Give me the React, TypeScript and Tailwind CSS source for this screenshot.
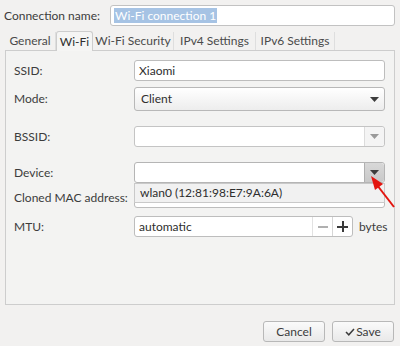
import { useState } from "react"

const tabs = [
  { name: "General", w: "w-[51px]" },
  { name: "Wi-Fi", w: "w-[37px]" },
  { name: "Wi-Fi Security", w: "w-[81px]" },
  { name: "IPv4 Settings", w: "w-[82px]" },
  { name: "IPv6 Settings", w: "w-[79px]" },
]

function Arrow({ light }: { light?: boolean }) {
  return (
    <svg width="9" height="5" viewBox="0 0 9 5">
      <path d="M0 0 L9 0 L4.5 5 Z" fill={light ? "#9a9a9a" : "#3c3c3c"} />
    </svg>
  )
}

function Label({ children }: { children: string }) {
  return <div className="w-[120px] shrink-0 text-[#3c3c3c]">{children}</div>
}

export default function App() {
  const [active] = useState("Wi-Fi")

  return (
    <div
      className="relative w-[400px] h-[346px] bg-[#f2f1f0] text-[12px] text-[#3c3c3c] overflow-hidden"
      style={{ fontFamily: "Lato, 'Open Sans', sans-serif" }}
    >
      {/* connection name */}
      <div className="flex items-center pt-[5px] pl-[4px] pr-[5px]">
        <div className="w-[106px] shrink-0">Connection name:</div>
        <div className="flex-1 h-[21px] rounded-[3px] border border-[#c2c2c2] bg-white flex items-center px-[3px]">
          <span className="bg-[#a6c3e4] text-white px-[1px] leading-[15px]">Wi-Fi connection 1</span>
        </div>
      </div>

      {/* tabs */}
      <div className="mt-[4px] mx-[5px]">
        <div className="flex items-end h-[20px]">
          {tabs.map((t) =>
            t.name === active ? (
              <div
                key={t.name}
                className={`${t.w} h-[20px] -mb-px relative z-10 flex items-center justify-center bg-[#f5f5f4] border border-b-0 border-[#cdcdcd] rounded-t-[3px] text-[#2e2e2e]`}
              >
                {t.name}
              </div>
            ) : (
              <div
                key={t.name}
                className={`${t.w} h-[18px] flex items-center justify-center border-r border-[#dedede] text-[#4a4a4a]`}
              >
                {t.name}
              </div>
            )
          )}
        </div>

        {/* panel */}
        <div className="h-[255px] border border-[#cdcdcd] bg-[#f3f3f2] pt-[9px] pl-[8px] pr-[9px]">
          {/* SSID */}
          <div className="flex items-center h-[21px]">
            <Label>SSID:</Label>
            <div className="flex-1 h-full rounded-[3px] border border-[#bdbdbd] bg-white flex items-center px-[4px] text-[#2e2e2e]">
              Xiaomi
            </div>
          </div>

          {/* Mode */}
          <div className="flex items-center h-[24px] mt-[6px]">
            <Label>Mode:</Label>
            <div className="flex-1 h-full rounded-[3px] border border-[#b8b8b8] bg-gradient-to-b from-white to-[#ededed] flex items-center justify-between pl-[6px] pr-[5px] text-[#2e2e2e]">
              <span>Client</span>
              <Arrow />
            </div>
          </div>

          {/* BSSID */}
          <div className="flex items-center h-[21px] mt-[15px]">
            <Label>BSSID:</Label>
            <div className="flex-1 h-full rounded-[3px] border border-[#c4c4c4] bg-white flex">
              <div className="flex-1" />
              <div className="w-[20px] border-l border-[#dcdcdc] bg-[#f4f4f4] rounded-r-[3px] flex items-center justify-center">
                <Arrow light />
              </div>
            </div>
          </div>

          {/* Device */}
          <div className="relative z-10 flex items-center h-[21px] mt-[15px]">
            <Label>Device:</Label>
            <div className="relative flex-1 h-full rounded-[3px] border border-[#b5b5b5] bg-white flex">
              <div className="flex-1" />
              <div className="w-[20px] border-l border-[#b0b0b0] bg-gradient-to-b from-[#d8d8d8] to-[#c9c9c9] rounded-r-[3px] flex items-center justify-center">
                <Arrow />
              </div>
              <div className="absolute left-[-1px] right-[-1px] top-[20px] h-[20px] border border-[#c9c9c9] bg-[#f1f1f1] flex items-center pl-[5px] text-[#2e2e2e]">
                wlan0 (12:81:98:E7:9A:6A)
              </div>
            </div>
          </div>

          {/* Cloned MAC */}
          <div className="flex items-center h-[21px] mt-[4px]">
            <Label>Cloned MAC address:</Label>
            <div className="flex-1 h-full rounded-[3px] border border-[#bdbdbd] bg-white" />
          </div>

          {/* MTU */}
          <div className="flex items-center h-[21px] mt-[8px]">
            <Label>MTU:</Label>
            <div className="flex-1 flex items-center h-full">
              <div className="w-[219px] h-full rounded-[3px] border border-[#bdbdbd] bg-white flex text-[#2e2e2e]">
                <div className="flex-1 flex items-center pl-[4px]">automatic</div>
                <div className="w-[20px] border-l border-[#e2e2e2] flex items-center justify-center">
                  <div className="w-[10px] h-[2px] bg-[#b0b0b0]" />
                </div>
                <div className="w-[20px] border-l border-[#d6d6d6] flex items-center justify-center relative">
                  <div className="w-[11px] h-[2px] bg-[#3a3a3a]" />
                  <div className="absolute w-[2px] h-[11px] bg-[#3a3a3a]" />
                </div>
              </div>
              <span className="ml-[6px] text-[#3c3c3c]">bytes</span>
            </div>
          </div>
        </div>
      </div>

      {/* buttons */}
      <div className="flex justify-end gap-[7px] mt-[16px] pr-[6px]">
        <button className="w-[62px] h-[21px] rounded-[3px] border border-[#b8b8b8] bg-gradient-to-b from-[#fafafa] to-[#e9e9e9] text-[#3c3c3c]">
          Cancel
        </button>
        <button className="w-[62px] h-[21px] rounded-[3px] border border-[#b8b8b8] bg-gradient-to-b from-[#fafafa] to-[#e9e9e9] text-[#3c3c3c] flex items-center justify-center gap-[1px]">
          <svg width="10" height="8" viewBox="0 0 10 8">
            <path d="M1 4 L3.8 6.8 L9 1" fill="none" stroke="#3c3c3c" strokeWidth="1.5" />
          </svg>
          <span>Save</span>
        </button>
      </div>

      {/* red annotation arrow */}
      <svg className="absolute left-0 top-0 z-20 pointer-events-none" width="400" height="346">
        <line x1="394" y1="207" x2="377" y2="185" stroke="#e3150f" strokeWidth="2" />
        <path d="M371 176 L383 184 L375 190 Z" fill="#e3150f" />
      </svg>
    </div>
  )
}
